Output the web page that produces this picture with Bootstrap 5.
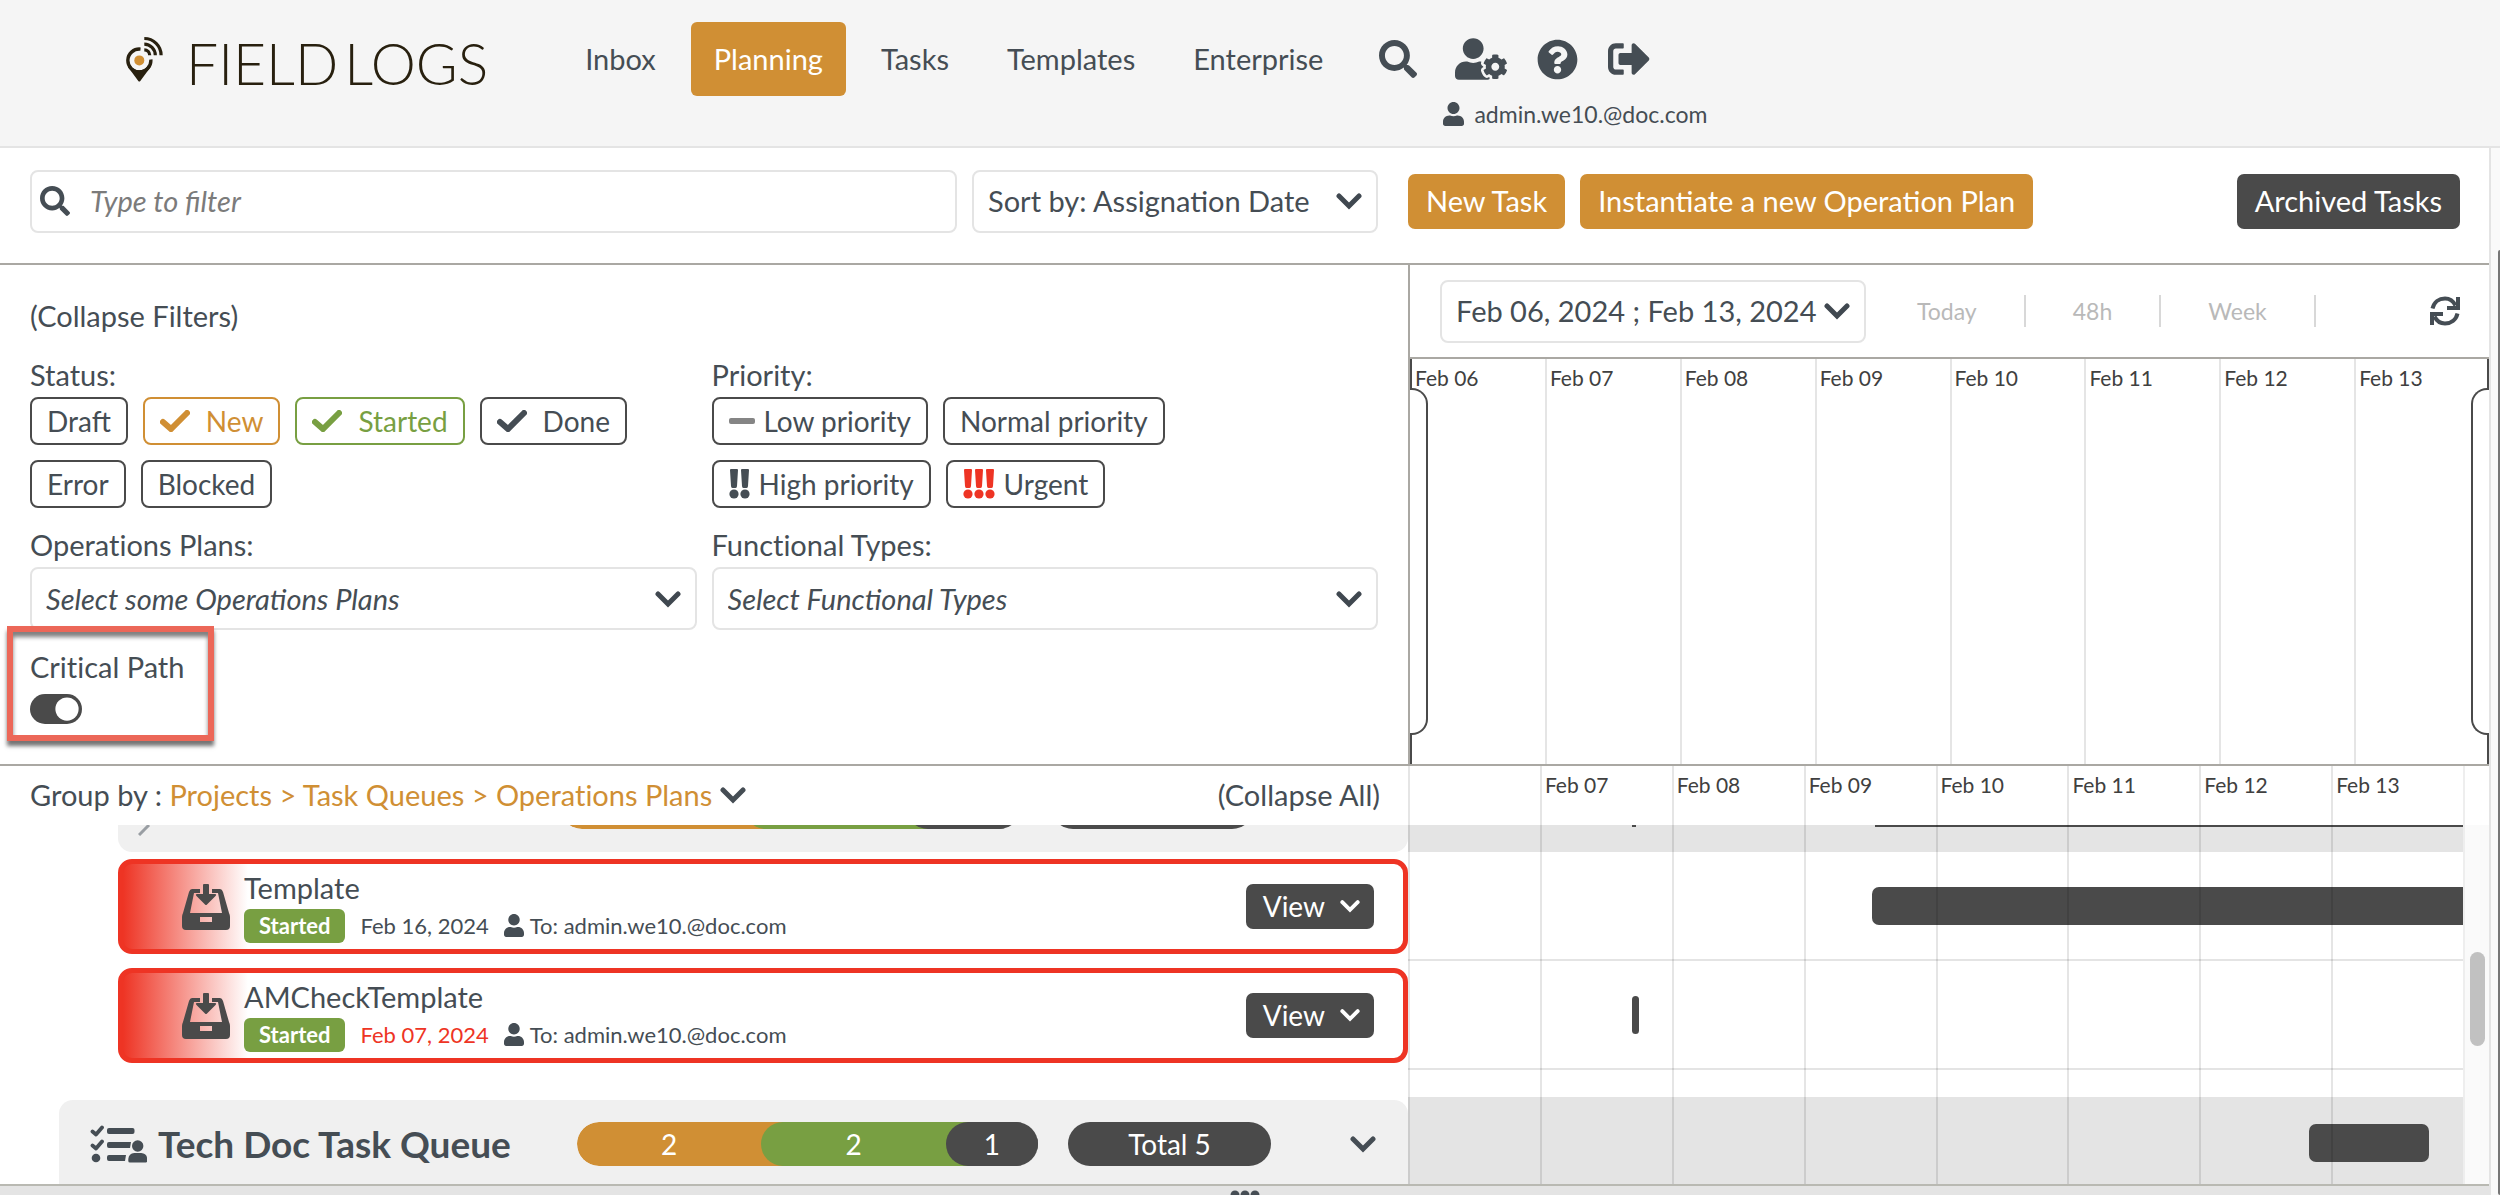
<!DOCTYPE html>
<html lang="en">
<head>
<meta charset="utf-8">
<meta name="viewport" content="width=device-width, initial-scale=1">
<title>Field Logs - Planning</title>
<link href="https://cdn.jsdelivr.net/npm/bootstrap@5.3.0/dist/css/bootstrap.min.css" rel="stylesheet">
<style>
:root{--ink:#454d54;--dark:#4a4a4a;--orange:#d08f34;--green:#789f42;--red:#ee3424;--rule:#e4e4e4;--edge:#aaa8a3;--panel:#f0f0f0}
body{font-family:Lato,"Open Sans",sans-serif;font-size:29px;line-height:34px;font-variant-ligatures:none;color:var(--ink);background:#fff}
svg{display:block;flex:none}
.ico{fill:currentColor}

/* header */
.topbar{background:#f5f5f5;border-bottom:2px solid var(--rule);height:148px;padding:22px 0 0 126px}
.wordmark{font-weight:300;font-size:57px;line-height:60px;color:#28200f;gap:6px;padding:11px 0 0 12px}
.topnav{gap:12px;margin-left:74px}
.topnav .nav-link{color:var(--ink);padding:20px 23px;border-radius:6px;line-height:34px}
.topnav .nav-link.active{background:var(--orange);color:#fff}
.tools{gap:30px;padding:16px 0 20px 33px}
.tools button:first-child{margin-right:8px}
.whoami{font-size:23px;line-height:28px;gap:10px;padding-left:97px}

/* page frame */
.page{border-right:2px solid var(--rule)}
.gutter{width:9px;background:#fafafa}
.gutter-thumb{width:2px;margin-top:102px;background:#777;border-radius:2px 0 0 2px}
.split{flex:0 0 1410px;width:1410px}
.split-rows{flex:0 0 1408px;width:1408px}

/* toolbar */
.toolbar-row{height:117px;border-bottom:2px solid var(--edge);padding-bottom:9px}
.searchrow{padding:0 30px;gap:15px}
.acts{padding-right:29px;gap:15px}
.sortbox{flex:0 0 406px;width:406px}
.rangebox{width:426px}
.field{height:63px;border:2px solid var(--rule);border-radius:8px;background-color:#fff;color:var(--ink)}
.field input{font-style:italic;color:var(--ink);font-size:29px;line-height:34px;padding-left:20px}
.field input::placeholder{color:#7b7b7b}
select.field{font-size:29px;line-height:34px;padding:0 14px;background-image:url("data:image/svg+xml,%3Csvg xmlns='http://www.w3.org/2000/svg' viewBox='0 0 26 18'%3E%3Cpath d='M3 4l10 10L23 4' fill='none' stroke='%23404850' stroke-width='5' stroke-linecap='round'/%3E%3C/svg%3E");background-size:26px 18px;background-position:right 14px center}
select.hinted{font-style:italic}
.act{font-size:29px;line-height:34px;padding:10px 18px;border:0;border-radius:7px;color:#fff;height:55px}
.act-orange{background:var(--orange)}
.act-dark{background:var(--dark)}
.act:hover{color:#fff;background:#666}

/* filters */
.pane-top{height:501px;border-bottom:2px solid var(--edge)}
.vline{border-right:2px solid var(--edge)}
.filters{padding:34px 30px 0 30px}
.plainlink{color:var(--ink);text-decoration:none}
.two{--bs-gutter-x:15px;padding-top:25px}
.lbl{margin-bottom:5px}
.pick{padding-top:20px}
.chips{gap:15px}
.chip{font-size:28px;line-height:34px;padding:5px 15px;border:2px solid var(--dark);border-radius:8px;color:var(--ink);gap:9px}
.chip-set{gap:16px}
.chip-new{color:var(--orange);border-color:var(--orange)}
.chip-started{color:var(--green);border-color:var(--green)}
.critical{padding-top:20px;width:152px}
.critical label{margin-bottom:10px}
.callout{left:-23px;right:-32px;top:-4px;height:115px;border:6px solid #ec6758;box-shadow:0 5px 4px rgba(0,0,0,.55),inset 0 5px 4px rgba(0,0,0,.5);pointer-events:none}
.critical .form-check-input{width:52px;height:30px;margin:0;border:0;background-color:var(--dark);background-image:url("data:image/svg+xml,%3Csvg xmlns='http://www.w3.org/2000/svg' viewBox='-4 -4 8 8'%3E%3Ccircle r='3.1' fill='%23fff'/%3E%3C/svg%3E")!important}

/* date range and overview */
.range-row{height:94px;padding:0 29px 0 30px;border-bottom:2px solid var(--edge)}
.span-link{font-size:23px;color:#b9b9b9;text-decoration:none;padding:0 47px;line-height:32px;border-right:2px solid #d8d8d8}
.span-link:first-child{padding-left:51px}
.day{flex:1 1 0;border-left:2px solid rgba(0,0,0,.1);font-size:21px;line-height:24px;padding:7px 0 0 3px;color:#404040;min-width:0}
.grip{width:18px;border:2px solid var(--dark);border-left:0;border-radius:0 16px 16px 0;top:29px;bottom:29px;left:0}
.grip-end{left:auto;right:0;border:2px solid var(--dark);border-right:0;border-radius:16px 0 0 16px}
.brush{border:solid var(--dark);border-width:0 2px;inset:0}
.brush::before,.brush::after{content:"";position:absolute;width:3px;top:31px;bottom:31px;background:#fff}
.brush::before{left:-2px}.brush::after{right:-2px}

/* task rows */
.groupbar{height:59px;padding:0 28px 2px 30px}
.groupbar .trail{color:var(--orange)}
.bare{background:none;border:0;padding:0;color:inherit}
.sliver{margin:0 0 7px 118px;height:27px;background:var(--panel);border-radius:0 0 14px 14px;padding:0 154px 0 20px}
.sliver .tally,.sliver .sum{margin-top:-40px}
.taskcard{margin-left:118px;height:95px;border:5px solid var(--red);border-radius:14px;background:linear-gradient(90deg,var(--red),#fff 125px);padding:0 29px 0 59px}
.card-gap{margin-top:14px}
.task-text{padding-left:14px}
.task-meta{font-size:22px;line-height:34px;gap:15px;padding-top:4px}
.who{gap:6px}
.late{color:var(--red)}
.state{background:var(--green);color:#fff;font-size:22px;line-height:24px;font-weight:700;padding:5px 15px;border-radius:6px}
.view{font-size:28px;height:45px;padding:5px 14px 6px 17px;gap:15px}
.queue{margin:37px 0 0 59px;height:88px;background:var(--panel);border-radius:14px 14px 0 0;padding:0 32px 0 31px}
.queue h2{font-size:37px;line-height:40px;font-weight:700;margin:0;padding-left:11px}
.tally{height:44px;width:461px;border-radius:22px;overflow:hidden;color:#fff;font-size:28px;line-height:44px;text-align:center}
.tally span{flex:1 1 0;border-radius:22px 0 0 22px}
.s-new{background:var(--orange);box-shadow:24px 0 0 var(--orange)}
.s-run{background:var(--green);box-shadow:24px 0 0 var(--green)}
.s-end{background:var(--dark);box-shadow:24px 0 0 var(--dark)}
.sum{width:203px;height:44px;font-size:28px;line-height:44px;border-radius:22px;background:var(--dark);color:#fff;text-align:center}
.sum-next{margin-left:30px}
.fold{margin-left:79px}

/* gantt */
.lane{height:109px;border-bottom:2px solid var(--rule)}
.lane-group{background:#e4e4e4}
.lane-cut{height:27px}
.lane-gap{height:29px}
.lane-last{height:88px;border:0}
.bar{height:38px;border-radius:7px;background:var(--dark);top:50%;transform:translateY(-50%)}
.hairbar{height:2px;top:0;transform:none;border-radius:0}
.daylayer{inset:0}
.trackcol{flex:0 0 26px;border-left:2px solid #eee}
.track{background:#fafafa}
.thumb{width:15px;height:94px;border-radius:8px;background:#c1c1c1;margin:127px auto 0}
.footbar{height:11px;background:#e4e4e4;border-top:2px solid #b9b9b2}
</style>
<script src="https://cdn.jsdelivr.net/npm/bootstrap@5.3.0/dist/js/bootstrap.bundle.min.js"></script>
</head>
<body class="vh-100 d-flex flex-column overflow-hidden">
<svg width="0" height="0" class="position-absolute" aria-hidden="true">
  <symbol id="i-search" viewBox="0 0 512 512"><path d="M505 442.7L405.3 343c-4.500-4.500-10.600-7-17-7H372c27.600-35.300 44-79.700 44-128C416 93.100 322.900 0 208 0S0 93.100 0 208s93.100 208 208 208c48.300 0 92.700-16.400 128-44v16.300c0 6.400 2.500 12.500 7 17l99.700 99.700c9.400 9.400 24.600 9.400 33.900 0l28.300-28.300c9.400-9.400 9.400-24.600.1-34zM208 336c-70.700 0-128-57.200-128-128 0-70.700 57.200-128 128-128 70.700 0 128 57.200 128 128 0 70.700-57.200 128-128 128z"/></symbol>
  <symbol id="i-user" viewBox="0 0 448 512"><path d="M224 256c70.700 0 128-57.300 128-128S294.700 0 224 0 96 57.300 96 128s57.300 128 128 128zm89.600 32h-16.700c-22.200 10.200-46.900 16-72.900 16s-50.600-5.800-72.900-16h-16.700C60.200 288 0 348.200 0 422.400V464c0 26.500 21.500 48 48 48h352c26.500 0 48-21.500 48-48v-41.600c0-74.200-60.200-134.400-134.400-134.400z"/></symbol>
  <symbol id="i-chev" viewBox="0 0 26 18"><path d="M3 4l10 10L23 4" fill="none" stroke="currentColor" stroke-width="5" stroke-linecap="round"/></symbol>
  <symbol id="i-check" viewBox="0 0 30 22"><path d="M3 12l8 7L27 3" fill="none" stroke="currentColor" stroke-width="6" stroke-linecap="round"/></symbol>
  <symbol id="i-bang" viewBox="0 0 10 30"><path d="M1 1q0-1 1-1h6q1 0 1 1L8 17q0 2-1.500 2h-3Q2 19 2 17z"/><circle cx="5" cy="25" r="4.600"/></symbol>
  <symbol id="i-tray" viewBox="0 0 48 46"><path fill-rule="evenodd" d="M10 5h8v4h-6L8 29h32L36 9h-6V5h8q2 0 3 3l6 21q1 2 1 4v9q0 4-4 4H4q-4 0-4-4v-9q0-2 1-4L7 8q1-3 3-3zM18 33v5h12v-5z"/><path d="M21 1q0-1 1-1h4q1 0 1 1v9h6q2 0 .5 2L25 20.500q-1 1-2 0L14.500 12Q13 10 15 10h6z"/></symbol>
</svg>

<header class="topbar d-flex align-items-start flex-shrink-0">
  <a href="#" class="d-flex text-decoration-none" aria-label="Field Logs">
    <svg width="48" height="62" viewBox="0 0 48 62">
      <path d="M14.500 27.100A11.500 11.500 0 1 0 24.800 37.500" fill="none" stroke="#28200f" stroke-width="3.400"/>
      <path d="M2 45L12.300 59q1 1 2 0L24.600 45 22 43.500A10.500 10.500 0 0 1 4.500 43.500z" fill="#28200f"/>
      <circle cx="13.300" cy="38.400" r="5" fill="#d08f34"/>
      <path d="M18.300 16.500A16.800 16.800 0 0 1 35.100 33.200M18.300 22.200A11.200 11.200 0 0 1 29.300 33.200M18.300 27.800A5.500 5.500 0 0 1 23.700 33.200" fill="none" stroke="#28200f" stroke-width="3.200"/>
    </svg>
    <span class="wordmark d-flex"><span>FIELD</span> <span>LOGS</span></span>
  </a>
  <nav class="nav topnav">
    <a class="nav-link" href="#">Inbox</a>
    <a class="nav-link active" href="#">Planning</a>
    <a class="nav-link" href="#">Tasks</a>
    <a class="nav-link" href="#">Templates</a>
    <a class="nav-link" href="#">Enterprise</a>
  </nav>
  <div>
    <div class="d-flex align-items-center tools">
      <button class="bare" aria-label="Search"><svg class="ico" width="38" height="38"><use href="#i-search"/></svg></button>
      <button class="bare" aria-label="User settings"><svg class="ico" width="52" height="42" viewBox="0 0 640 512"><path d="M610.5 373.300c2.600-14.100 2.600-28.500 0-42.600l25.800-14.900c3-1.700 4.300-5.200 3.300-8.500-6.700-21.600-18.200-41.200-33.200-57.400-2.300-2.500-6-3.100-9-1.400l-25.800 14.900c-10.900-9.300-23.400-16.500-36.900-21.300v-29.800c0-3.400-2.400-6.400-5.700-7.100-22.300-5-45-4.800-66.200 0-3.300.7-5.700 3.700-5.700 7.100v29.800c-13.500 4.800-26 12-36.900 21.300l-25.800-14.900c-2.900-1.700-6.700-1.100-9 1.400-15 16.200-26.500 35.800-33.200 57.400-1 3.300.4 6.800 3.300 8.500l25.800 14.900c-2.600 14.100-2.600 28.500 0 42.600l-25.800 14.900c-3 1.700-4.300 5.200-3.300 8.500 6.700 21.600 18.200 41.100 33.200 57.400 2.300 2.500 6 3.100 9 1.400l25.800-14.900c10.900 9.300 23.400 16.500 36.900 21.300v29.800c0 3.400 2.400 6.400 5.700 7.100 22.300 5 45 4.800 66.200 0 3.300-.7 5.700-3.700 5.700-7.100v-29.800c13.500-4.800 26-12 36.900-21.300l25.800 14.900c2.900 1.700 6.700 1.100 9-1.400 15-16.200 26.500-35.800 33.200-57.400 1-3.300-.4-6.800-3.300-8.500l-25.800-14.900zM496 400.500c-26.800 0-48.500-21.800-48.500-48.500s21.800-48.500 48.500-48.500 48.500 21.800 48.500 48.500-21.700 48.500-48.500 48.500zM224 256c70.700 0 128-57.300 128-128S294.700 0 224 0 96 57.300 96 128s57.300 128 128 128zm201.200 226.500c-2.300-1.200-4.600-2.600-6.800-3.900l-7.900 4.600c-6 3.400-12.800 5.300-19.600 5.300-10.900 0-21.400-4.600-28.900-12.600-18.300-19.800-32.300-43.900-40.200-69.600-5.500-17.700 1.900-36.400 17.900-45.700l7.900-4.600c-.1-2.600-.1-5.200 0-7.800l-7.900-4.600c-16-9.200-23.400-28-17.900-45.700.9-2.900 2.200-5.800 3.200-8.700-3.800-.3-7.500-1.200-11.400-1.200h-16.700c-22.200 10.200-46.900 16-72.900 16s-50.600-5.800-72.900-16h-16.700C60.200 288 0 348.200 0 422.400V464c0 26.500 21.500 48 48 48h352c10.100 0 19.500-3.200 27.200-8.500-1.200-3.800-2-7.700-2-11.800v-9.200z"/></svg></button>
      <button class="bare" aria-label="Help"><svg class="ico" width="41" height="41" viewBox="0 0 512 512"><path d="M504 256c0 137-111 248-248 248S8 393 8 256C8 119 119 8 256 8s248 111 248 248zM262.700 90c-54.500 0-89.300 23-116.600 63.800-3.500 5.300-2.400 12.400 2.700 16.200l34.700 26.300c5.200 4 12.600 3 16.700-2.100 17.800-22.700 30.100-35.800 57.300-35.800 20.400 0 45.700 13.200 45.700 33 0 15-12.400 22.600-32.600 34C247.100 238.500 216 255 216 296v4c0 6.600 5.400 12 12 12h56c6.600 0 12-5.400 12-12v-1.300c0-28.500 83.200-29.700 83.200-106.700 0-58-60.200-102-116.500-102zM256 338c-25.400 0-46 20.600-46 46s20.600 46 46 46 46-20.600 46-46-20.600-46-46-46z"/></svg></button>
      <button class="bare" aria-label="Sign out"><svg class="ico" width="42" height="42" viewBox="0 0 512 512"><path d="M497 273L329 441c-15 15-41 4.500-41-17v-96H152c-13.300 0-24-10.700-24-24v-96c0-13.300 10.700-24 24-24h136V88c0-21.400 25.900-32 41-17l168 168c9.300 9.400 9.300 24.600 0 34zM192 436v-40c0-6.600-5.400-12-12-12H96c-17.700 0-32-14.300-32-32V160c0-17.700 14.300-32 32-32h84c6.600 0 12-5.400 12-12V76c0-6.600-5.400-12-12-12H96c-53 0-96 43-96 96v192c0 53 43 96 96 96h84c6.600 0 12-5.400 12-12z"/></svg></button>
    </div>
    <div class="whoami d-flex align-items-center"><svg class="ico" width="21" height="24"><use href="#i-user"/></svg>admin.we10.@doc.com</div>
  </div>
</header>

<div class="d-flex flex-grow-1 overflow-hidden">
<main class="page d-flex flex-column flex-grow-1 overflow-hidden">
  <div class="toolbar-row d-flex flex-shrink-0 align-items-center">
    <div class="split-rows d-flex searchrow">
      <div class="field d-flex align-items-center flex-grow-1 px-2">
        <svg class="ico" width="30" height="30"><use href="#i-search"/></svg>
        <input class="form-control border-0 bg-transparent shadow-none" type="text" placeholder="Type to filter" aria-label="Type to filter">
      </div>
      <select class="form-select field sortbox" aria-label="Sort by"><option>Sort by: Assignation Date</option></select>
    </div>
    <div class="d-flex flex-grow-1 acts">
      <button class="btn act act-orange">New Task</button>
      <button class="btn act act-orange">Instantiate a new Operation Plan</button>
      <button class="btn act act-dark ms-auto">Archived Tasks</button>
    </div>
  </div>

  <div class="pane-top d-flex flex-shrink-0">
    <section class="split filters vline">
      <a href="#" class="plainlink">(Collapse Filters)</a>
      <div class="row two">
        <div class="col-6">
          <div class="lbl">Status:</div>
          <div class="d-flex flex-wrap chips">
            <button class="btn chip">Draft</button>
            <button class="btn chip chip-set chip-new d-flex align-items-center"><svg width="30" height="22"><use href="#i-check"/></svg>New</button>
            <button class="btn chip chip-set chip-started d-flex align-items-center"><svg width="30" height="22"><use href="#i-check"/></svg>Started</button>
            <button class="btn chip chip-set d-flex align-items-center"><svg width="30" height="22"><use href="#i-check"/></svg>Done</button>
            <button class="btn chip">Error</button>
            <button class="btn chip">Blocked</button>
          </div>
        </div>
        <div class="col-6">
          <div class="lbl">Priority:</div>
          <div class="d-flex flex-wrap chips pe-5 me-5">
            <button class="btn chip d-flex align-items-center"><svg width="26" height="6" viewBox="0 0 26 6"><rect width="26" height="6" rx="2" fill="#858585"/></svg>Low priority</button>
            <button class="btn chip">Normal priority</button>
            <button class="btn chip d-flex align-items-center"><svg class="ico" width="21" height="30" viewBox="0 0 21 30"><use href="#i-bang" width="10" height="30"/><use href="#i-bang" x="11" width="10" height="30"/></svg>High priority</button>
            <button class="btn chip d-flex align-items-center"><svg width="32" height="30" viewBox="0 0 32 30" fill="#ee3424"><use href="#i-bang" width="10" height="30"/><use href="#i-bang" x="11" width="10" height="30"/><use href="#i-bang" x="22" width="10" height="30"/></svg>Urgent</button>
          </div>
        </div>
        <div class="col-6">
          <label class="lbl d-block pick" for="plans">Operations Plans:</label>
          <select id="plans" class="form-select field hinted"><option>Select some Operations Plans</option></select>
        </div>
        <div class="col-6">
          <label class="lbl d-block pick" for="types">Functional Types:</label>
          <select id="types" class="form-select field hinted"><option>Select Functional Types</option></select>
        </div>
      </div>
      <div class="critical form-switch position-relative ps-0">
        <label for="crit" class="d-block text-nowrap">Critical Path</label>
        <input class="form-check-input float-none d-block" type="checkbox" role="switch" id="crit" checked>
        <div class="callout position-absolute"></div>
      </div>
    </section>
    <section class="d-flex flex-column flex-grow-1">
      <div class="range-row d-flex align-items-center flex-shrink-0">
        <select class="form-select field rangebox" aria-label="Date range"><option>Feb 06, 2024 ; Feb 13, 2024</option></select>
        <nav class="d-flex flex-grow-1">
          <a href="#" class="span-link">Today</a><a href="#" class="span-link">48h</a><a href="#" class="span-link">Week</a>
        </nav>
        <button class="bare" aria-label="Refresh"><svg width="30" height="30" viewBox="0 0 30 30" fill="none" stroke="#454d54" stroke-width="4"><path d="M2.500 12.500C4 6 9 2.500 15 2.500c4.500 0 8 2 10.500 7M28 1v11H17M27.500 17.500C26 24 21 27.500 15 27.500c-4.500 0-8-2-10.500-7M2 29V18h11"/></svg></button>
      </div>
      <div class="position-relative flex-grow-1 d-flex">
        <div class="day">Feb 06</div><div class="day">Feb 07</div><div class="day">Feb 08</div><div class="day">Feb 09</div><div class="day">Feb 10</div><div class="day">Feb 11</div><div class="day">Feb 12</div><div class="day">Feb 13</div>
        <div class="brush position-absolute"></div>
        <div class="grip position-absolute"></div>
        <div class="grip grip-end position-absolute"></div>
      </div>
    </section>
  </div>

  <div class="d-flex flex-grow-1 overflow-hidden">
    <section class="split-rows overflow-hidden">
      <div class="groupbar d-flex align-items-center">
        <span>Group by : <span class="trail">Projects &gt; Task Queues &gt; Operations Plans</span></span>
        <button class="bare ms-2" aria-label="Change grouping"><svg width="26" height="18"><use href="#i-chev"/></svg></button>
        <a href="#" class="plainlink ms-auto">(Collapse All)</a>
      </div>
      <div>
        <div class="sliver d-flex overflow-hidden">
          <svg width="14" height="11" viewBox="0 0 14 11"><path d="M1 10L11 0" stroke="#999ea3" stroke-width="3"/></svg>
          <div class="tally d-flex ms-auto"><span class="s-new" style="flex-grow:8"></span><span class="s-run" style="flex-grow:7"></span><span class="s-end" style="flex-grow:5"></span></div>
          <div class="sum sum-next"></div>
        </div>
        <article class="taskcard d-flex align-items-center">
          <svg width="48" height="46" fill="#4a4a4a"><use href="#i-tray"/></svg>
          <div class="task-text">
            <div>Template</div>
            <div class="task-meta d-flex align-items-center"><span class="state">Started</span><span>Feb 16, 2024</span><span class="d-flex align-items-center who"><svg class="ico" width="20" height="23"><use href="#i-user"/></svg>To: admin.we10.@doc.com</span></div>
          </div>
          <button class="btn act act-dark view ms-auto d-flex align-items-center">View<svg width="20" height="14"><use href="#i-chev"/></svg></button>
        </article>
        <article class="taskcard card-gap d-flex align-items-center">
          <svg width="48" height="46" fill="#4a4a4a"><use href="#i-tray"/></svg>
          <div class="task-text">
            <div>AMCheckTemplate</div>
            <div class="task-meta d-flex align-items-center"><span class="state">Started</span><span class="late">Feb 07, 2024</span><span class="d-flex align-items-center who"><svg class="ico" width="20" height="23"><use href="#i-user"/></svg>To: admin.we10.@doc.com</span></div>
          </div>
          <button class="btn act act-dark view ms-auto d-flex align-items-center">View<svg width="20" height="14"><use href="#i-chev"/></svg></button>
        </article>
        <div class="queue d-flex align-items-center">
          <svg width="57" height="38" viewBox="0 0 57 38" fill="#454d54"><path d="M2.500 6.500l3.500 3 6-7M2.500 20.500l3.500 3 6-7" fill="none" stroke="#454d54" stroke-width="3.800" stroke-linecap="round" stroke-linejoin="round"/><circle cx="6" cy="33" r="4.300"/><rect x="17" y="3" width="27.500" height="6" rx="2"/><path d="M19 17h22l-1 6H19q-2 0-2-2v-2q0-2 2-2zM19 30h17l-1 6H19q-2 0-2-2v-2q0-2 2-2z"/><circle cx="47.700" cy="21" r="5.700"/><path d="M38.300 36v-2q.5-5.500 6-6h7q5.500.5 6 6v2q0 1.500-1.500 1.500H40q-1.700 0-1.700-1.500z"/></svg>
          <h2>Tech Doc Task Queue</h2>
          <div class="tally d-flex ms-auto"><span class="s-new" style="flex-grow:2">2</span><span class="s-run" style="flex-grow:2">2</span><span class="s-end" style="flex-grow:1">1</span></div>
          <div class="sum sum-next">Total 5</div>
          <button class="bare fold" aria-label="Collapse queue"><svg width="26" height="18"><use href="#i-chev"/></svg></button>
        </div>
      </div>
    </section>
    <section class="flex-grow-1 d-flex">
      <div class="position-relative overflow-hidden flex-grow-1">
        <div class="groupbar"></div>
        <div class="lane lane-group position-relative lane-cut"><div class="bar position-absolute hairbar" style="left:21.200%;width:.4%"></div><div class="bar position-absolute hairbar" style="left:44.300%;right:0"></div></div>
        <div class="lane position-relative"><div class="bar position-absolute rounded-end-0" style="left:44%;right:0"></div></div>
        <div class="lane position-relative"><div class="bar position-absolute" style="left:21.200%;width:.7%"></div></div>
        <div class="lane lane-gap"></div>
        <div class="lane lane-group position-relative lane-last"><div class="bar position-absolute" style="left:85.400%;width:11.400%"></div></div>
        <div class="daylayer position-absolute d-flex">
          <div class="day"></div><div class="day">Feb 07</div><div class="day">Feb 08</div><div class="day">Feb 09</div><div class="day">Feb 10</div><div class="day">Feb 11</div><div class="day">Feb 12</div><div class="day">Feb 13</div>
        </div>
      </div>
      <div class="trackcol d-flex flex-column"><div class="groupbar px-0"></div><div class="track flex-grow-1"><div class="thumb"></div></div></div>
    </section>
  </div>
  <div class="footbar flex-shrink-0 d-flex justify-content-center overflow-hidden"><svg class="mt-1" width="30" height="9" viewBox="0 0 30 9" fill="#454d54"><circle cx="5" cy="5" r="4.500"/><circle cx="15" cy="5" r="4.500"/><circle cx="25" cy="5" r="4.500"/></svg></div>
</main>
<div class="gutter d-flex justify-content-end"><div class="gutter-thumb"></div></div>
</div>
</body>
</html>
